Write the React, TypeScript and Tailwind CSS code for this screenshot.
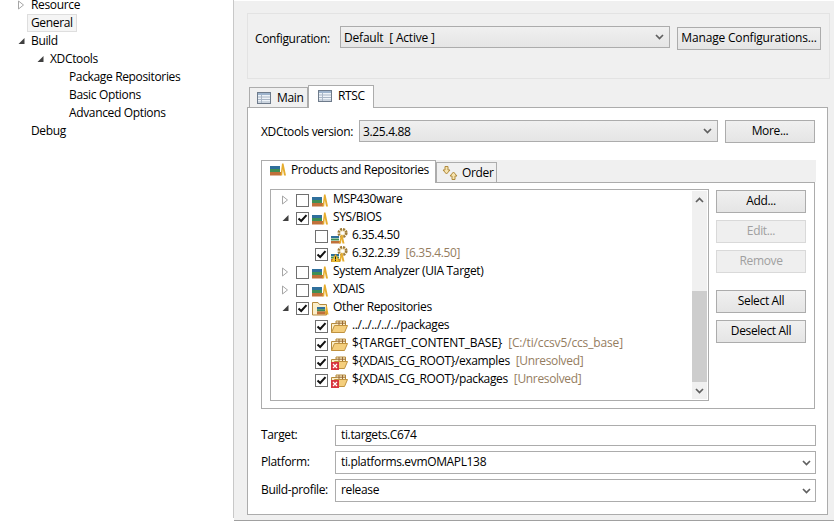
import React from 'react';

const selectBox = 'flex items-center justify-between border border-[#acacac] bg-gradient-to-b from-[#f0f0f0] to-[#e5e5e5] pl-[3px] pr-[5px] h-[22px]';

function Chevron({ up = false }: { up?: boolean }) {
  return (
    <svg width="9" height="6" viewBox="0 0 9 6" className="shrink-0">
      <path d={up ? 'M1 5 L4.5 1.5 L8 5' : 'M1 1 L4.5 4.5 L8 1'} fill="none" stroke="#606060" strokeWidth="1.7" />
    </svg>
  );
}

function Twisty({ open, none }: { open?: boolean; none?: boolean }) {
  if (none) return <span className="w-[10px] shrink-0" />;
  return (
    <svg width="10" height="10" viewBox="0 0 10 10" className="shrink-0">
      {open ? (
        <path d="M8.5 2 V8 H2.5 Z" fill="#404040" />
      ) : (
        <path d="M2.5 1 L7.5 5 L2.5 9 Z" fill="#fff" stroke="#a6a6a6" />
      )}
    </svg>
  );
}

function Check({ on }: { on?: boolean }) {
  return (
    <span className="flex h-[13px] w-[13px] shrink-0 items-center justify-center border border-[#707070] bg-white">
      {on && (
        <svg width="11" height="9" viewBox="0 0 11 9">
          <path d="M1.5 4.5 L4.2 7 L9.5 1.2" fill="none" stroke="#111" strokeWidth="2" />
        </svg>
      )}
    </span>
  );
}

function Books() {
  return (
    <svg width="16" height="13" viewBox="0 0 16 13" className="shrink-0">
      <rect x="0" y="3" width="10" height="3" fill="#2f6f9c" />
      <rect x="0" y="6" width="10" height="3" fill="#3f8f55" />
      <rect x="0" y="9" width="11" height="3.5" fill="#c0703a" />
      <path d="M10.5 12.5 L12 0.5 H13.5 L16 12.5 H14 L12.8 6 L12.2 12.5 Z" fill="#e6ad2e" />
    </svg>
  );
}

function Gear() {
  return (
    <svg width="17" height="16" viewBox="0 0 17 16" className="shrink-0">
      <circle cx="11.5" cy="5" r="3.8" fill="#f3e8c8" stroke="#a07c38" strokeWidth="2.6" strokeDasharray="2 1" />
      <circle cx="11.5" cy="5" r="1.5" fill="#fff" />
      <rect x="0" y="8" width="8" height="2" fill="#2f6f9c" />
      <rect x="0" y="10.5" width="8" height="2" fill="#3f8f55" />
      <rect x="0" y="13" width="9" height="2.5" fill="#c0703a" />
      <path d="M8 15.5 L10 7 L11.5 7 L13.5 15.5 H11.5 L10.5 11 L10 15.5 Z" fill="#e6ad2e" />
    </svg>
  );
}

function Warn() {
  return (
    <svg width="9" height="8" viewBox="0 0 9 8" className="absolute bottom-0 left-0">
      <path d="M4.5 0 L9 8 H0 Z" fill="#f2c230" stroke="#a8791a" strokeWidth="0.5" />
      <rect x="4" y="2.5" width="1" height="3" fill="#222" />
      <rect x="4" y="6" width="1" height="1" fill="#222" />
    </svg>
  );
}

function Err() {
  return (
    <svg width="8" height="8" viewBox="0 0 8 8" className="absolute bottom-0 left-0">
      <rect width="8" height="8" fill="#d8363f" />
      <path d="M2 2 L6 6 M6 2 L2 6" stroke="#fff" strokeWidth="1.2" />
    </svg>
  );
}

function Folder() {
  return (
    <svg width="17" height="13" viewBox="0 0 17 13" className="shrink-0">
      <path d="M0.5 12.5 V3.5 H5 V1 H14.5 V5" fill="#fbeec8" stroke="#b58a3c" />
      <path d="M8 1 V5 M11.5 1 V5 M5 3.2 H14.5" stroke="#9a6b34" />
      <path d="M0.5 12.5 L3.5 5.5 H16.5 L13.5 12.5 Z" fill="#f4ce7c" stroke="#c0923f" />
    </svg>
  );
}

function FolderBooks() {
  return (
    <svg width="17" height="15" viewBox="0 0 17 15" className="shrink-0">
      <path d="M0.5 14 V1.5 H6 L7.5 3.5 H14.5 V14 Z" fill="#fbeec8" stroke="#b58a3c" />
      <rect x="5" y="6" width="8" height="2.2" fill="#2f6f9c" />
      <rect x="5" y="8.2" width="8" height="2.2" fill="#3f8f55" />
      <rect x="5" y="10.4" width="9" height="3" fill="#c0703a" />
      <path d="M13 13.5 L14 5 H15 L16.5 13.5 H15 L14.5 9.5 L14.2 13.5 Z" fill="#e6ad2e" />
    </svg>
  );
}

function TableIcon() {
  return (
    <svg width="14" height="12" viewBox="0 0 14 12" className="shrink-0">
      <rect x="0.5" y="0.5" width="13" height="11" fill="#eef3f8" stroke="#6e7b8b" />
      <rect x="1" y="1" width="12" height="2" fill="#9db3cc" />
      <path d="M1 5 H13 M1 7.5 H13 M1 10 H13 M4.5 3 V11" stroke="#a9b6c6" />
    </svg>
  );
}

function OrderIcon() {
  return (
    <svg width="16" height="14" viewBox="0 0 16 14" className="shrink-0">
      <path d="M3 0.5 H6 V4 H8 L4.5 8 L1 4 H3 Z" fill="#f6e3ae" stroke="#b08a3c" />
      <path d="M10 13.5 H13 V10 H15 L11.5 6 L8 10 H10 Z" fill="#f6e3ae" stroke="#b08a3c" />
    </svg>
  );
}

function Button({ label, disabled, w = 'w-[90px]' }: { label: string; disabled?: boolean; w?: string }) {
  return (
    <button
      className={
        disabled
          ? `${w} h-[23px] shrink-0 border border-[#d9d9d9] bg-[#efefef] pb-[2px] text-[#a0a0a0]`
          : `${w} h-[23px] shrink-0 border border-[#acacac] bg-gradient-to-b from-[#f0f0f0] to-[#e5e5e5] pb-[2px] text-black`
      }
    >
      {label}
    </button>
  );
}

function NavRow({ level, label, twisty, selected }: { level: number; label: string; twisty?: 'open' | 'closed'; selected?: boolean }) {
  const pad = level === 0 ? 'pl-[16px]' : level === 1 ? 'pl-[35px]' : 'pl-[54px]';
  return (
    <div className={`flex h-[18px] items-center ${pad}`}>
      <Twisty open={twisty === 'open'} none={!twisty} />
      <span className={selected ? 'ml-[1px] h-[18px] border border-[#dedede] bg-[#f5f5f5] px-[3px] leading-[16px]' : 'ml-[5px]'}>{label}</span>
    </div>
  );
}

function TreeRow({ twisty, checked, icon, label }: { twisty?: 'open' | 'closed'; checked?: boolean; icon: React.ReactNode; label: string }) {
  return (
    <div className="flex h-[18px] items-center whitespace-nowrap pl-[8px]">
      <Twisty open={twisty === 'open'} />
      <span className="ml-[6px]"><Check on={checked} /></span>
      <span className="ml-[3px] flex w-[16px] justify-center">{icon}</span>
      <span className="ml-[5px] pb-[2px]">{label}</span>
    </div>
  );
}

function ChildRow({ checked, icon, label, note, wide }: { checked?: boolean; icon: React.ReactNode; label: string; note?: string; wide?: boolean }) {
  return (
    <div className={`flex h-[18px] items-center whitespace-nowrap pl-[43px] ${wide ? 'tracking-[-0.15px]' : ''}`}>
      <Check on={checked} />
      <span className="relative ml-[3px] flex h-[16px] w-[17px] items-center">{icon}</span>
      <span className="ml-[4px] pb-[2px]">{label}</span>
      {note && <span className="ml-[6px] pb-[2px] text-[#957d5f]">{note}</span>}
    </div>
  );
}

export default function App() {
  return (
    <div className="flex h-[522px] w-[834px] overflow-hidden bg-white font-['Open_Sans',sans-serif] text-[12px] leading-[16px] tracking-[-0.35px] text-black">
      {/* left navigation tree */}
      <aside className="w-[234px] shrink-0 -translate-y-[4px] border-r border-[#c8c8c8]">
        <NavRow level={0} label="Resource" twisty="closed" />
        <NavRow level={0} label="General" selected />
        <NavRow level={0} label="Build" twisty="open" />
        <NavRow level={1} label="XDCtools" twisty="open" />
        <NavRow level={2} label="Package Repositories" />
        <NavRow level={2} label="Basic Options" />
        <NavRow level={2} label="Advanced Options" />
        <NavRow level={0} label="Debug" />
      </aside>

      <main className="mt-px h-[520px] flex-1 border-b border-[#a0a0a0] bg-[#f0f0f0] pl-[13px] pt-[12px]">
        {/* configuration group */}
        <div className="flex h-[66px] w-[583px] items-start border border-[#e3e3e3] pl-[7px] pt-[12px]">
          <label className="w-[85px] pt-[5px]">Configuration:</label>
          <div className={`${selectBox} w-[330px]`}>
            <span className="whitespace-pre pt-px tracking-[-0.2px]">Default  [ Active ]</span>
            <Chevron />
          </div>
          <div className="ml-[7px] mt-px">
            <Button label="Manage Configurations..." w="w-[144px] tracking-[-0.18px]" />
          </div>
        </div>

        {/* page tabs */}
        <div className="mt-[6px] flex h-[22px] items-end pl-[2px]">
          <div className="flex h-[20px] w-[59px] items-center gap-[6px] border border-b-0 border-[#acacac] pl-[7px]">
            <TableIcon />
            <span>Main</span>
          </div>
          <div className="relative z-10 -mb-px flex h-[23px] w-[66px] items-center gap-[6px] border border-b-0 border-[#acacac] bg-white pb-[3px] pl-[9px]">
            <TableIcon />
            <span>RTSC</span>
          </div>
        </div>

        <div className="h-[408px] w-[581px] border border-[#acacac] bg-white pl-[13px] pt-[12px]">
          <div className="flex items-start">
            <label className="w-[98px] pt-[4px]">XDCtools version:</label>
            <div className={`${selectBox} w-[359px]`}>
              <span className="pt-px">3.25.4.88</span>
              <Chevron />
            </div>
            <div className="ml-[7px]">
              <Button label="More..." />
            </div>
          </div>

          {/* inner tabs */}
          <div className="mt-[17px] flex h-[22px] w-[555px] items-end bg-[#f0f0f0]">
            <div className="relative z-10 -mb-px flex h-[23px] w-[175px] items-center gap-[5px] border border-b-0 border-[#acacac] bg-white pb-[5px] pl-[8px]">
              <Books />
              <span>Products and Repositories</span>
            </div>
            <div className="flex h-[20px] w-[61px] items-center gap-[4px] border border-b-0 border-[#acacac] pl-[5px]">
              <OrderIcon />
              <span>Order</span>
            </div>
          </div>

          <div className="flex h-[227px] w-[554px] items-start border border-[#acacac] pl-[8px] pt-[6px]">
            <div className="flex h-[212px] w-[439px] border border-[#acacac] p-px">
              <div className="flex-1">
                <TreeRow twisty="closed" icon={<Books />} label="MSP430ware" />
                <TreeRow twisty="open" checked icon={<Books />} label="SYS/BIOS" />
                <ChildRow icon={<Gear />} label="6.35.4.50" />
                <ChildRow checked icon={<><Gear /><Warn /></>} label="6.32.2.39" note="[6.35.4.50]" />
                <TreeRow twisty="closed" icon={<Books />} label="System Analyzer (UIA Target)" />
                <TreeRow twisty="closed" icon={<Books />} label="XDAIS" />
                <TreeRow twisty="open" checked icon={<FolderBooks />} label="Other Repositories" />
                <ChildRow checked icon={<Folder />} label="../../../../../packages" />
                <ChildRow wide checked icon={<Folder />} label="${TARGET_CONTENT_BASE}" note="[C:/ti/ccsv5/ccs_base]" />
                <ChildRow checked icon={<><Folder /><Err /></>} label="${XDAIS_CG_ROOT}/examples" note="[Unresolved]" />
                <ChildRow checked icon={<><Folder /><Err /></>} label="${XDAIS_CG_ROOT}/packages" note="[Unresolved]" />
              </div>
              {/* scrollbar */}
              <div className="flex w-[15px] flex-col items-center bg-[#f0f0f0]">
                <div className="flex h-[17px] items-center"><Chevron up /></div>
                <div className="h-[83px]" />
                <div className="h-[91px] w-full bg-[#cdcdcd]" />
                <div className="flex h-[17px] items-center"><Chevron /></div>
              </div>
            </div>
            <div className="ml-[7px] mt-px flex flex-col gap-[7px]">
              <Button label="Add..." />
              <Button label="Edit..." disabled />
              <Button label="Remove" disabled />
              <div className="mt-[10px]">
                <Button label="Select All" />
              </div>
              <Button label="Deselect All" />
            </div>
          </div>

          {/* target fields */}
          <div className="mt-[16px] flex h-[21px] items-center">
            <label className="w-[74px] pb-[2px]">Target:</label>
            <div className="flex h-[21px] w-[481px] items-center border border-[#acacac] pb-[2px] pl-[5px]">ti.targets.C674</div>
          </div>
          <div className="mt-[5px] flex h-[23px] items-center">
            <label className="w-[74px] pb-[2px]">Platform:</label>
            <div className="flex h-[23px] w-[481px] items-center justify-between border border-[#acacac] pl-[5px] pr-[4px]">
              <span className="pb-[2px]">ti.platforms.evmOMAPL138</span>
              <Chevron />
            </div>
          </div>
          <div className="mt-[5px] flex h-[23px] items-center">
            <label className="w-[74px] pb-[2px]">Build-profile:</label>
            <div className="flex h-[23px] w-[481px] items-center justify-between border border-[#acacac] pl-[5px] pr-[4px]">
              <span className="pb-[2px]">release</span>
              <Chevron />
            </div>
          </div>
        </div>
      </main>
    </div>
  );
}
